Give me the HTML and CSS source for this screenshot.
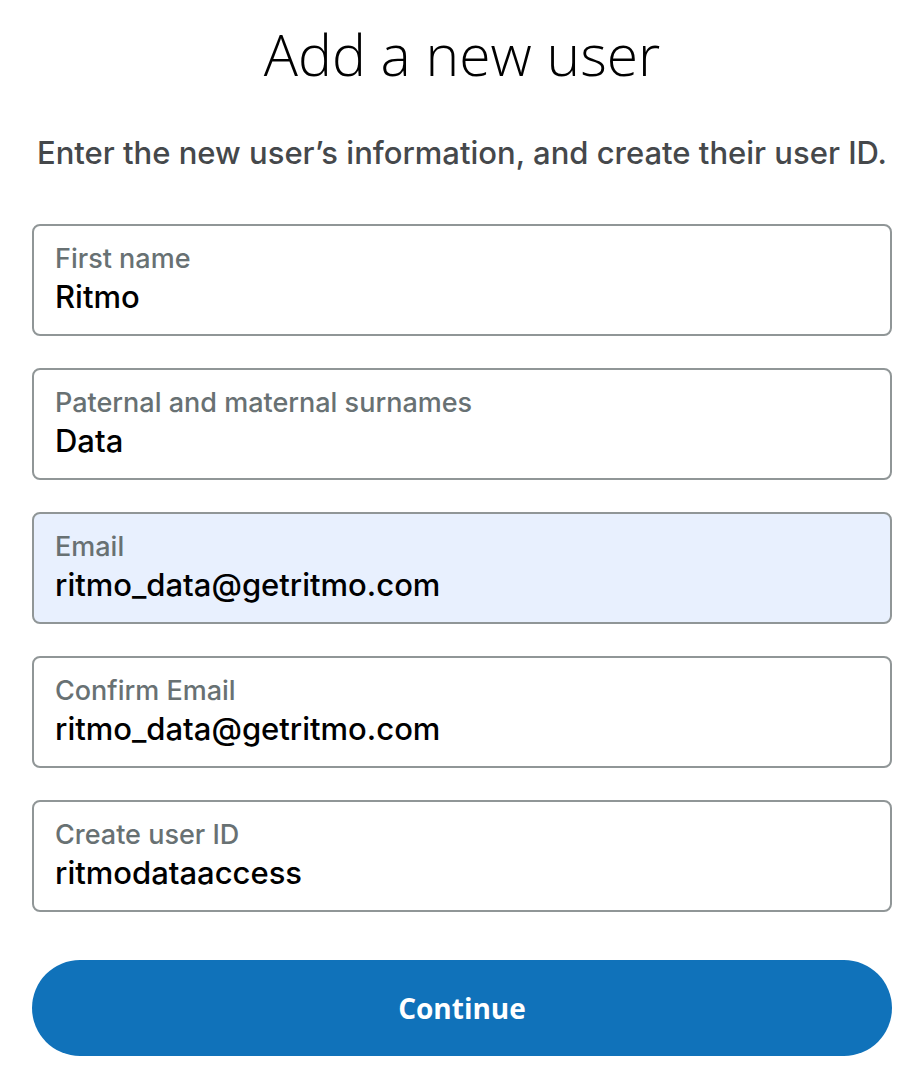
FILE: index.html
```
<!DOCTYPE html>
<html lang="en">
<head>
<meta charset="utf-8">
<meta name="viewport" content="width=device-width, initial-scale=1">
<title>Add a new user</title>
<link rel="stylesheet" href="styles.css">
</head>
<body>
<main class="page">
  <h1 class="title">Add a new user</h1>
  <p class="intro">Enter the new user’s information, and create their user ID.</p>
  <form class="form">
    <div class="field">
      <label class="label" for="first">First name</label>
      <input class="input" id="first" type="text" value="Ritmo">
    </div>
    <div class="field">
      <label class="label" for="surnames">Paternal and maternal surnames</label>
      <input class="input" id="surnames" type="text" value="Data">
    </div>
    <div class="field field-filled">
      <label class="label" for="email">Email</label>
      <input class="input" id="email" type="email" value="ritmo_data@getritmo.com">
    </div>
    <div class="field">
      <label class="label" for="confirm">Confirm Email</label>
      <input class="input" id="confirm" type="email" value="ritmo_data@getritmo.com">
    </div>
    <div class="field">
      <label class="label" for="userid">Create user ID</label>
      <input class="input" id="userid" type="text" value="ritmodataaccess">
    </div>
    <button class="submit" type="button">Continue</button>
  </form>
</main>
</body>
</html>
```
FILE: styles.css
```
* {
  box-sizing: border-box;
}

body {
  margin: 0;
  background: #fff;
  color: #000;
  font-family: Inter, "Liberation Sans", Arial, sans-serif;
  font-weight: 500;
}

.page {
  padding: 14px 32px 22px;
}

.title {
  margin: 0;
  font-family: "Open Sans", sans-serif;
  font-size: 57px;
  font-weight: 300;
  line-height: 80px;
  text-align: center;
}

.intro {
  margin: 36px -16px 48px;
  color: #45484b;
  font-size: 31px;
  line-height: 46px;
  text-align: center;
}

.form {
  display: flex;
  flex-direction: column;
  gap: 32px;
}

.field {
  display: flex;
  flex-direction: column;
  padding: 16px 21px 18px;
  border: 2px solid #909697;
  border-radius: 8px;
  background: #fff;
}

.field-filled {
  background: #e8f0fe;
}

.label {
  color: #687173;
  font-size: 27px;
  line-height: 34px;
}

.input {
  width: 100%;
  height: 40px;
  padding: 0;
  border: 0;
  outline: 0;
  background: transparent;
  color: #000;
  font-family: inherit;
  font-size: 31px;
  font-weight: 500;
}

.submit {
  margin-top: 16px;
  height: 96px;
  border: 0;
  border-radius: 48px;
  background: #1072ba;
  color: #fff;
  font-family: "Open Sans", sans-serif;
  font-size: 28px;
  font-weight: 700;
}
```
